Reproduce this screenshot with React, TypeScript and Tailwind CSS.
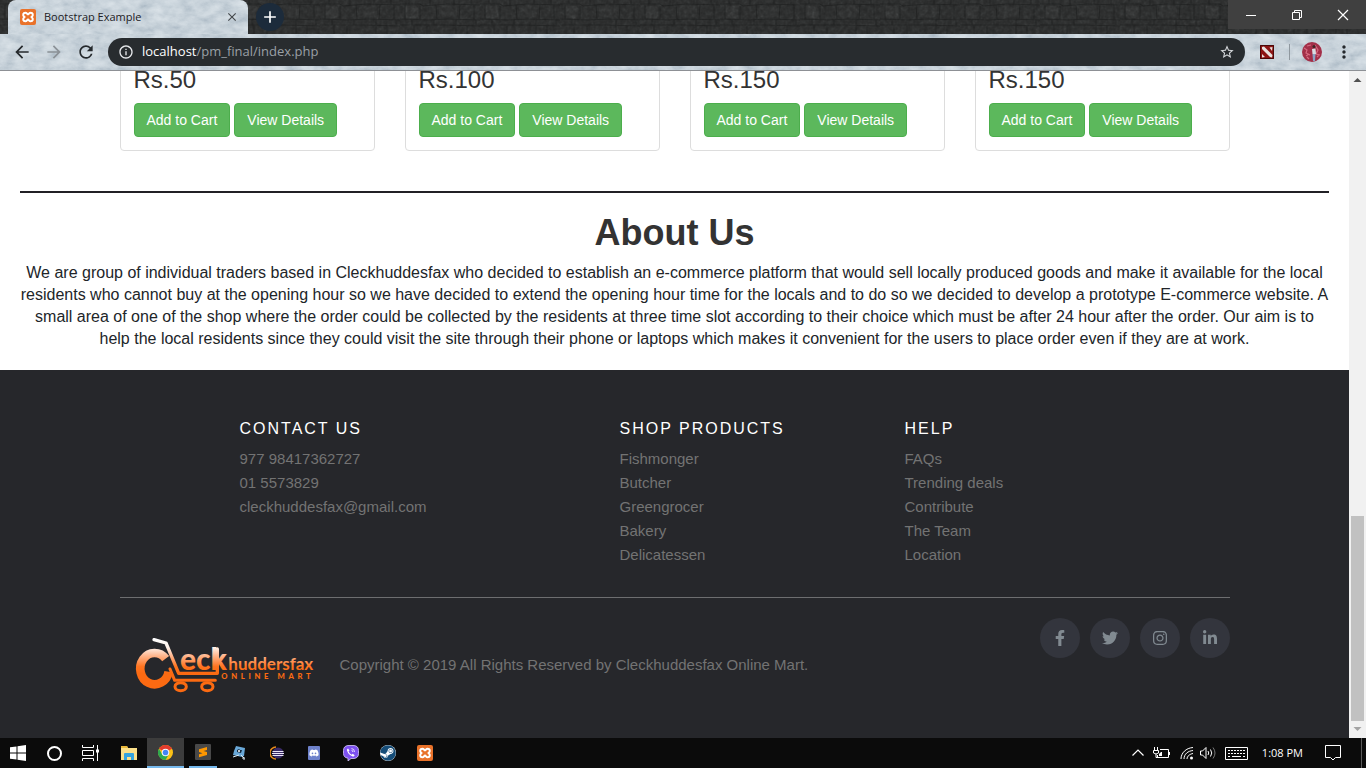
import React from 'react';
import {
  FaFacebookF,
  FaTwitter,
  FaInstagram,
  FaLinkedinIn,
  FaDiscord,
  FaSteam,
} from 'react-icons/fa';
import { MdArrowBack, MdArrowForward, MdRefresh, MdInfoOutline, MdStarBorder, MdMoreVert, MdClose, MdAdd } from 'react-icons/md';

const prices = ['Rs.50', 'Rs.100', 'Rs.150', 'Rs.150'];

const footerColumns = [
  { title: 'Contact Us', links: ['977 98417362727', '01 5573829', 'cleckhuddesfax@gmail.com'] },
  { title: 'Shop Products', links: ['Fishmonger', 'Butcher', 'Greengrocer', 'Bakery', 'Delicatessen'] },
  { title: 'Help', links: ['FAQs', 'Trending deals', 'Contribute', 'The Team', 'Location'] },
];

const socials = [
  { label: 'Facebook', Icon: FaFacebookF },
  { label: 'Twitter', Icon: FaTwitter },
  { label: 'Instagram', Icon: FaInstagram },
  { label: 'LinkedIn', Icon: FaLinkedinIn },
];

function BrickTexture() {
  return (
    <svg className="absolute inset-0 h-full w-full" aria-hidden="true">
      <defs>
        <pattern id="bricks" width="80" height="34" patternUnits="userSpaceOnUse">
          <rect width="80" height="34" fill="#3b3d3d" />
          <rect x="5" y="6" width="13" height="12" rx="3" fill="#444646" />
          <rect x="39" y="6" width="18" height="11" rx="2" fill="#404242" />
          <path d="M0 4h20l3 2 24-2 33 1M0 19l28 1 20-1 32 1M0 25h44l36 1M5 5v14M20 6v13M36 5l1 14M60 5l-1 14M74 5v14M12 20v5M34 20v5M56 20v5M76 20v5M14 25v9M27 26v8M56 26v8M67 26v8M9 0v4M30 0v5M54 0v4M71 0v4" stroke="#2a2c2c" strokeWidth="1" fill="none" />
        </pattern>
        <filter id="grit" x="0" y="0" width="100%" height="100%">
          <feTurbulence type="fractalNoise" baseFrequency="0.25" numOctaves="3" seed="4" />
          <feColorMatrix values="0 0 0 0 0.08  0 0 0 0 0.08  0 0 0 0 0.08  0.9 0 0 0 -0.34" colorInterpolationFilters="sRGB" />
        </filter>
      </defs>
      <rect width="100%" height="100%" fill="url(#bricks)" />
      <rect width="100%" height="100%" filter="url(#grit)" />
    </svg>
  );
}

function IceTexture({ seed }: { seed: number }) {
  const id = `ice-${seed}`;
  return (
    <svg className="absolute inset-0 h-full w-full" aria-hidden="true">
      <filter id={id} x="0" y="0" width="100%" height="100%">
        <feTurbulence type="fractalNoise" baseFrequency="0.07 0.12" numOctaves="5" seed={seed} />
        <feColorMatrix values="0.32 0 0 0 0.55  0.28 0 0 0 0.62  0.24 0 0 0 0.68  0 0 0 0 1" colorInterpolationFilters="sRGB" />
      </filter>
      <rect width="100%" height="100%" filter={`url(#${id})`} />
    </svg>
  );
}

function XamppBadge() {
  return (
    <span className="flex size-4 shrink-0 items-center justify-center rounded-[2px] bg-[#e9722a]">
      <svg viewBox="0 0 16 16" className="size-4" fill="none" stroke="#fff" strokeWidth="2" aria-hidden="true">
        <path d="M4.400 8C2.200 6 3.200 3.700 5.300 3.700c1.700 0 1.700 1.700 2.700 1.700s1-1.700 2.700-1.700c2.100 0 3.100 2.300.9 4.300 2.200 2 1.200 4.300-.9 4.300-1.700 0-1.700-1.700-2.700-1.700s-1 1.700-2.700 1.700C3.200 12.300 2.200 10 4.400 8z" />
      </svg>
    </span>
  );
}

function TitleBar() {
  return (
    <div className="relative flex h-[34px] bg-[#363838]">
      <BrickTexture />
      <div className="relative ml-2 flex w-60 items-center overflow-hidden rounded-t-lg pr-2 pl-3">
        <IceTexture seed={7} />
        <span className="relative"><XamppBadge /></span>
        <span className="relative ml-2 flex-1 font-['Open_Sans',sans-serif] text-[11px] text-[#1c2024]">Bootstrap Example</span>
        <button aria-label="Close tab" className="relative flex size-4 items-center justify-center text-[#45494d]">
          <MdClose className="size-[14px]" />
        </button>
      </div>
      <button aria-label="New tab" className="relative ml-2 flex size-7 items-center justify-center self-center rounded-full bg-[#1c2b3b] text-white">
        <MdAdd className="size-5" />
      </button>
      <div className="relative ml-auto flex h-[29px] bg-[#404040] text-white">
        <button aria-label="Minimize" className="flex w-[46px] items-center justify-center">
          <svg viewBox="0 0 12 12" className="size-3" stroke="currentColor" aria-hidden="true"><path d="M1 6.500h10" /></svg>
        </button>
        <button aria-label="Restore" className="flex w-[46px] items-center justify-center">
          <svg viewBox="0 0 12 12" className="size-3" fill="none" stroke="currentColor" aria-hidden="true"><path d="M1.500 3.500h7v7h-7zM3.500 3.500v-2h7v7h-2" /></svg>
        </button>
        <button aria-label="Close" className="flex w-[46px] items-center justify-center">
          <svg viewBox="0 0 12 12" className="size-3" stroke="currentColor" strokeWidth="1.200" aria-hidden="true"><path d="M1 1l10 10M11 1L1 11" /></svg>
        </button>
      </div>
    </div>
  );
}

function Toolbar() {
  return (
    <div className="relative flex h-[37px] items-center border-b border-[#8d9095] pr-3 pl-3">
      <IceTexture seed={3} />
      <div className="relative flex gap-3 text-[#25292c]">
        <button aria-label="Back"><MdArrowBack className="size-5" /></button>
        <button aria-label="Forward" className="text-[#8b9197]"><MdArrowForward className="size-5" /></button>
        <button aria-label="Reload"><MdRefresh className="size-5" /></button>
      </div>
      <div className="relative ml-3 flex h-7 flex-1 items-center rounded-full bg-[#282c2f] pr-2.5 pl-2.5 font-['Open_Sans',sans-serif] text-[13px] text-[#9aa0a6]">
        <MdInfoOutline className="size-4 text-[#e8eaed]" />
        <a href="#address" className="ml-2 flex-1"><span className="text-white">localhost</span>/pm_final/index.php</a>
        <button aria-label="Bookmark this page" className="text-[#d6d9dc]"><MdStarBorder className="size-4" /></button>
      </div>
      <div className="relative ml-3.5 flex items-center">
        <button aria-label="Dota 2 extension">
          <svg viewBox="0 0 16 16" className="size-4" aria-hidden="true">
            <path d="M1 1h14v14H1z" fill="#8c1414" />
            <path d="M3 3l2-.5 8.500 8.500-.5 2.500-2-.5L3 5zM10.500 3.500l3-.5-.5 4zM3 10l3 3-3 .5z" fill="#e8e3e0" />
            <path d="M1.500 1.500h13v13h-13z" fill="none" stroke="#4a0909" />
          </svg>
        </button>
        <span className="mr-3 ml-3.5 h-4 w-px bg-[#8f989f]" />
        <button aria-label="Profile">
          <svg viewBox="0 0 20 20" className="size-5" aria-hidden="true">
            <circle cx="10" cy="10" r="10" fill="#a32f48" />
            <path d="M2 6l3 2-1 3 4 2M13 3l3 5-2 4 4 1M4 14l3-2M5 4l4-1M15 15l2-2M7 17l-2-2" stroke="#d66a80" strokeWidth="1.200" fill="none" />
            <circle cx="12" cy="4.500" r="1.500" fill="#3d2525" />
            <path d="M10 7l3.500-.5.5 5.500h-3.500z" fill="#d9dde2" />
            <path d="M10.500 12h3l-.5 7h-2z" fill="#8aa3c4" />
          </svg>
        </button>
        <button aria-label="Menu" className="ml-3 text-[#25292c]"><MdMoreVert className="size-5" /></button>
      </div>
    </div>
  );
}

function ProductCard({ price }: { price: string }) {
  return (
    <div className="rounded-[4px] border border-[#ddd] px-[13px] pt-10 pb-[13px]">
      <h3 className="mb-2.5 text-2xl leading-[26px] text-[#333]">{price}</h3>
      <div className="flex gap-1">
        {['Add to Cart', 'View Details'].map((label) => (
          <button key={label} className="rounded-[4px] border border-[#4cae4c] bg-[#5cb85c] px-3 py-1.5 text-sm leading-5 whitespace-nowrap text-white">
            {label}
          </button>
        ))}
      </div>
    </div>
  );
}

function ShopLogo() {
  return (
    <svg viewBox="0 0 660 240" className="h-20 w-[220px] shrink-0" role="img" aria-label="Cleckhuddersfax Online Mart">
      <defs>
        <linearGradient id="flame" gradientUnits="userSpaceOnUse" x1="0" y1="42" x2="0" y2="145">
          <stop offset="0" stopColor="#fff" />
          <stop offset="0.25" stopColor="#fff1e9" />
          <stop offset="0.5" stopColor="#ffb48a" />
          <stop offset="0.8" stopColor="#ff7420" />
          <stop offset="1" stopColor="#fb6a12" />
        </linearGradient>
      </defs>
      <g fill="none" stroke="url(#flame)" strokeLinecap="round" strokeLinejoin="round">
        <path d="M137 101A43 47 0 1 0 146 140" strokeWidth="26" strokeLinecap="butt" />
        <path d="M102 44l36 10 38 91h116V72" strokeWidth="10" />
        <path d="M150 132l14 34h122" strokeWidth="9" />
        <ellipse cx="182" cy="185" rx="17" ry="12" strokeWidth="9" />
        <ellipse cx="262" cy="185" rx="17" ry="12" strokeWidth="9" />
      </g>
      <g fill="url(#flame)" fontFamily="Lato, sans-serif">
        <text x="180" y="134" fontSize="90" fontWeight="900">eck</text>
        <text x="325" y="134" fontSize="51" fontWeight="700">huddersfax</text>
        <text x="304" y="162" fontSize="23" fontWeight="900" letterSpacing="11">ONLINE MART</text>
      </g>
    </svg>
  );
}

function ScrollBar() {
  return (
    <div className="flex w-[17px] shrink-0 flex-col items-center bg-[#f1f1f1]" aria-hidden="true">
      <svg viewBox="0 0 17 17" className="size-[17px]"><path d="M4.500 11h8l-4-4z" fill="#505050" /></svg>
      <div className="flex-1" />
      <div className="h-[205px] w-[13px] bg-[#c1c1c1]" />
      <svg viewBox="0 0 17 17" className="size-[17px]"><path d="M4.500 6h8l-4 4z" fill="#a3a3a3" /></svg>
    </div>
  );
}

function Page() {
  return (
    <main className="flex min-w-0 flex-1 flex-col justify-end overflow-hidden bg-white">
      <section className="mx-auto grid w-full max-w-[1140px] shrink-0 grid-cols-4 gap-[30px] px-[15px]">
        {prices.map((price, i) => <ProductCard key={i} price={price} />)}
      </section>
      <section className="mx-5 mt-10 shrink-0 border-t-2 border-[#212025] pt-5 pb-5 text-center text-[#333]">
        <h1 className="text-4xl leading-10 font-bold">About Us</h1>
        <p className="mt-[9px] text-base leading-[22px] text-[#212529]">
          We are group of individual traders based in Cleckhuddesfax who decided to establish an e-commerce platform that would sell locally produced goods and make it available for the local residents who cannot buy at the opening hour so we have decided to extend the opening hour time for the locals and to do so we decided to develop a prototype E-commerce website. A small area of one of the shop where the order could be collected by the residents at three time slot according to their choice which must be after 24 hour after the order. Our aim is to help the local residents since they could visit the site through their phone or laptops which makes it convenient for the users to place order even if they are at work.
        </p>
      </section>
      <footer className="shrink-0 bg-[#26272b] pt-[47px] pb-[33px] text-[15px] leading-6 text-[#737373]">
        <div className="mx-auto w-full max-w-[1140px] px-[15px]">
          <div className="grid grid-cols-[380px_285px_1fr] pl-[120px]">
            {footerColumns.map(({ title, links }) => (
              <div key={title}>
                <h6 className="mb-1.5 text-base leading-6 tracking-[2px] text-white uppercase">{title}</h6>
                <ul>
                  {links.map((link) => <li key={link}><a href="#footer">{link}</a></li>)}
                </ul>
              </div>
            ))}
          </div>
          <hr className="mt-[30px] border-[#6d6e70]" />
          <div className="flex items-start justify-between pt-5">
            <div className="mt-[7px] flex items-center">
              <ShopLogo />
              <p>Copyright © 2019 All Rights Reserved by Cleckhuddesfax Online Mart.</p>
            </div>
            <div className="flex gap-2.5">
              {socials.map(({ label, Icon }) => (
                <a key={label} href="#social" aria-label={label} className="flex size-10 items-center justify-center rounded-full bg-[#33353d] text-[#818a91]">
                  <Icon className="size-4" />
                </a>
              ))}
            </div>
          </div>
        </div>
      </footer>
    </main>
  );
}

function ChromeIcon() {
  return (
    <svg viewBox="0 0 16 16" className="size-[15px]" aria-hidden="true">
      <circle cx="8" cy="8" r="8" fill="#fbc116" />
      <path d="M8 8L1.070 4A8 8 0 0 1 14.930 4z" fill="#e33b2e" />
      <path d="M1.070 4A8 8 0 0 0 8 16l3.500-6L8 8 4.500 10z" fill="#2da94f" />
      <circle cx="8" cy="8" r="4" fill="#fff" />
      <circle cx="8" cy="8" r="3" fill="#4285f4" />
    </svg>
  );
}

function TaskBar() {
  const item = 'flex h-full w-[37px] items-center justify-center';
  return (
    <div className="flex h-[30px] shrink-0 items-center bg-[#0b0b0b] text-white">
      <button aria-label="Start" className="flex h-full w-9 items-center justify-center">
        <svg viewBox="0 0 16 16" className="size-4" fill="#fff" aria-hidden="true">
          <path d="M0 2.300l6.500-.9v6.100H0zM7.500 1.200L16 0v7.500H7.500zM0 8.500h6.500v6.100L0 13.700zM7.500 8.500H16V16l-8.500-1.200z" />
        </svg>
      </button>
      <button aria-label="Cortana" className="flex h-full w-9 items-center justify-center"><span className="size-[15px] rounded-full border-2 border-white" /></button>
      <button aria-label="Task view" className="mr-0.5 flex h-full w-9 items-center justify-center">
        <svg viewBox="0 0 17 16" className="h-4 w-[17px]" fill="none" stroke="#fff" aria-hidden="true">
          <path d="M.5 0v2.500h11V0M.5 5.500h11v5H.5zM.5 16v-2.500h11V16M15.500 0v16" />
          <path d="M14 4.500h3v3h-3z" fill="#fff" stroke="none" />
        </svg>
      </button>
      <button aria-label="File Explorer" className={item}>
        <svg viewBox="0 0 16 14" className="h-3.5 w-4" aria-hidden="true">
          <path d="M0 0h6l1 2h9v12H0z" fill="#fce08a" />
          <path d="M0 0h6l1 2H0z" fill="#eab83a" />
          <path d="M3 14V8q0-1 1-1h8q1 0 1 1v6h-3v-3H6v3z" fill="#35a4df" />
        </svg>
      </button>
      <button aria-label="Google Chrome" className={`${item} border-b-2 border-[#76b9ed] bg-[#3c3c3c]`}><ChromeIcon /></button>
      <div className="flex h-full w-[37px] justify-center">
        <button aria-label="Sublime Text" className="flex h-full w-7 items-center justify-center border-b-2 border-[#76b9ed]">
          <svg viewBox="0 0 16 16" className="size-4" aria-hidden="true">
            <rect width="16" height="16" rx="1" fill="#484848" />
            <path d="M4 5.200L12 3v3L8.500 7l3.500 1v3l-8 2.300v-3L7.500 9.200 4 8z" fill="#ff9800" />
          </svg>
        </button>
      </div>
      <button aria-label="Paint tool" className={item}>
        <svg viewBox="0 0 16 16" className="size-4" aria-hidden="true">
          <path d="M4 1l9 2-1 8-2 1-9-2 1-4z" fill="#69a8d8" />
          <path d="M5 5l2-1 1 1 2 0-1 3-4-1z" fill="#12283d" />
          <path d="M1 12l6-2M9 10l3 3v2M10 13h3" stroke="#dbe9f2" fill="none" />
          <circle cx="7" cy="6" r="1" fill="#fff" />
        </svg>
      </button>
      <button aria-label="Eclipse" className={item}>
        <svg viewBox="0 0 14 14" className="size-3.5" aria-hidden="true">
          <path d="M6 1a6 6 0 0 0 0 12" stroke="#e68a1b" strokeWidth="1.500" fill="none" />
          <circle cx="8" cy="7" r="5.500" fill="#392a67" />
          <path d="M2.500 5.500h11M2 7.500h12M2.500 9.500h11" stroke="#e9e5f5" />
        </svg>
      </button>
      <button aria-label="Discord" className={item}>
        <span className="flex h-3.5 w-3 items-center justify-center rounded-[1px] bg-[#6e82cb]"><FaDiscord className="size-2.5" /></span>
      </button>
      <button aria-label="Viber" className={item}>
        <svg viewBox="0 0 16 16" className="size-4" aria-hidden="true">
          <path d="M5 .5h6q4.500.5 4.500 5v3q0 4.500-4.500 5H8l-3 2.500v-2.800Q.5 12.500.5 8.500v-3Q.5 1 5 .5z" fill="#7d51ef" stroke="#d9ccff" strokeWidth=".8" />
          <path d="M5 3.500l1.500 2-1 1q1 2.300 3.200 3.200l1-1 2 1.500q-.7 1.800-2 1.300Q5.500 10 4 5.500 3.700 4 5 3.500z" fill="#fff" />
          <path d="M8.500 3.500q3 .3 3 3.500M8.500 5.300q1.300.1 1.400 1.700" stroke="#fff" strokeWidth=".8" fill="none" />
        </svg>
      </button>
      <button aria-label="Steam" className={item}>
        <span className="flex size-4 items-center justify-center rounded-full bg-white"><FaSteam className="size-4 text-[#164d78]" /></span>
      </button>
      <button aria-label="XAMPP" className={item}><XamppBadge /></button>
      <div className="ml-auto flex h-full items-center">
        <svg viewBox="0 0 14 14" className="size-3.5" fill="none" stroke="#fff" strokeWidth="1.200" aria-hidden="true"><path d="M1.500 9.500L7 4l5.500 5.500" /></svg>
        <svg viewBox="0 0 17 14" className="ml-2 h-3.5 w-[17px]" fill="none" stroke="#fff" aria-hidden="true"><path d="M7 3.500h8.500v8h-11V9M16.500 6v3M1.500 1v3M4.500 1v3M.5 4.500h5V7q-2.500 2-5 0zM3 8v3.500h2" /><path d="M8 6h1v4H6V8z" fill="#fff" stroke="none" /></svg>
        <svg viewBox="0 0 14 14" className="ml-2.5 size-3.5" fill="none" stroke="#fff" aria-hidden="true"><path d="M1 13C1 7 6 2 13 1.500M4 13c0-5 4-8 9-8.500M7 13c0-3 3-5 6-5.500" /><circle cx="11.500" cy="12" r="1.500" fill="#fff" stroke="none" /></svg>
        <svg viewBox="0 0 17 14" className="ml-1.5 h-3.5 w-[17px]" fill="none" stroke="#fff" aria-hidden="true"><path d="M.5 5h2L6 1.500v11L2.500 9h-2zM8 5q1.500 2 0 4M10.500 3.500q2.500 3.500 0 7" /><path d="M13 1.500q4 5.500 0 11" stroke="#777" /></svg>
        <svg viewBox="0 0 23 13" className="ml-2 h-[13px] w-[23px]" fill="none" stroke="#fff" aria-hidden="true"><path d="M.5.500h22v12H.500z" /><path d="M3 3.500h17M3 6.500h17" strokeDasharray="2 1" /><path d="M3 9.500h2M7 9.500h9M18 9.500h2" /></svg>
        <span className="ml-3.5 font-['Open_Sans',sans-serif] text-[11px] whitespace-nowrap">1:08 PM</span>
        <button aria-label="Notifications" className="ml-[22px]">
          <svg viewBox="0 0 16 16" className="size-4" fill="none" stroke="#fff" aria-hidden="true"><path d="M.5.500h15v12h-5L8 15l-2.500-2.500h-5z" /></svg>
        </button>
        <span className="ml-5 h-full w-[5px] border-l border-[#5a5a5a]" />
      </div>
    </div>
  );
}

export default function App() {
  return (
    <div className="flex h-screen flex-col overflow-hidden font-['Liberation_Sans',Arial,sans-serif]">
      <header className="shrink-0">
        <TitleBar />
        <Toolbar />
      </header>
      <div className="flex min-h-0 flex-1">
        <Page />
        <ScrollBar />
      </div>
      <TaskBar />
    </div>
  );
}
